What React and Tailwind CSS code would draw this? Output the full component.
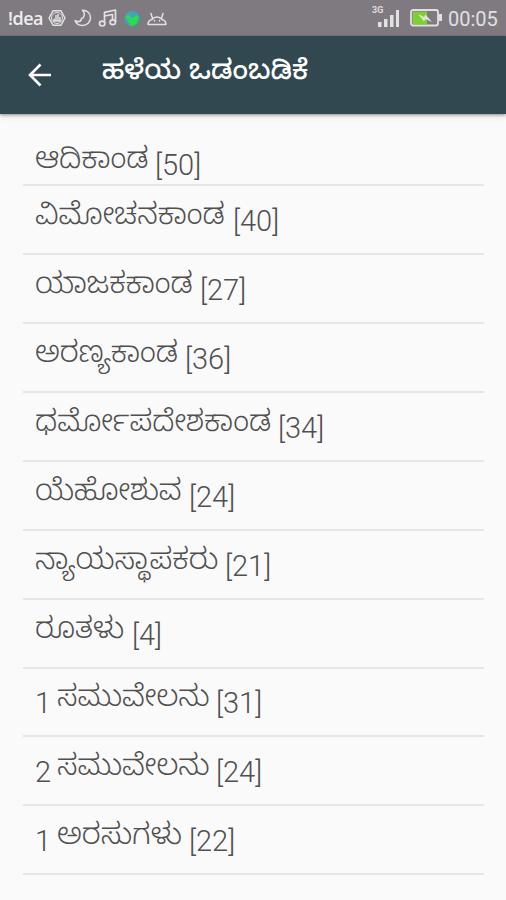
import { clsx } from 'clsx';

const books = [
  { name: 'ಆದಿಕಾಂಡ', chapters: 50, width: 120 },
  { name: 'ವಿಮೋಚನಕಾಂಡ', chapters: 40, width: 198 },
  { name: 'ಯಾಜಕಕಾಂಡ', chapters: 27, width: 165 },
  { name: 'ಅರಣ್ಯಕಾಂಡ', chapters: 36, width: 150 },
  { name: 'ಧರ್ಮೋಪದೇಶಕಾಂಡ', chapters: 34, width: 243 },
  { name: 'ಯೆಹೋಶುವ', chapters: 24, width: 154 },
  { name: 'ನ್ಯಾಯಸ್ಥಾಪಕರು', chapters: 21, width: 190 },
  { name: 'ರೂತಳು', chapters: 4, width: 97 },
  { part: 1, name: 'ಸಮುವೇಲನು', chapters: 31, width: 159 },
  { part: 2, name: 'ಸಮುವೇಲನು', chapters: 24, width: 159 },
  { part: 1, name: 'ಅರಸುಗಳು', chapters: 22, width: 132 },
];

function StatusBar() {
  return (
    <div className="flex h-9 items-center justify-between bg-[#7e7a7f] pl-2 pr-2 text-[#e2e0e3]">
      <div className="flex items-center">
        <span className="w-10 font-['Open_Sans',sans-serif] text-[18px] font-semibold leading-none tracking-[-0.5px] text-[#efedf0]">!dea</span>
        <svg className="h-[18px] w-[18px]" viewBox="0 0 18 18" fill="none" stroke="currentColor" strokeWidth="1.5">
          <path d="M5 1.8h8l4 7.2-4 7.2H5L1 9z" strokeLinejoin="round" />
          <circle cx="9" cy="9" r="5.5" strokeWidth="1" />
          <path d="M5 12h8M6.2 9.5V12M8 6v6M10 5v7M12 8v4" />
        </svg>
        <svg className="ml-2 h-[18px] w-[18px]" viewBox="0 0 18 18" fill="none" stroke="currentColor" strokeWidth="1.5" strokeLinejoin="round">
          <path d="M8.5 1.3c4.5-.3 8 3 8 7.3 0 4.5-3.5 7.9-8 7.900-3.500 0-6.200-1.500-7.400-4.700 2.500 1.200 5 .8 6.200-.6-.5-1.200 0-2.200 1.700-2.200 1.800-2.200 1.700-5.200-.5-7.700z" />
        </svg>
        <svg className="ml-1.5 h-[19px] w-[19px]" viewBox="0 0 19 19" fill="none" stroke="currentColor" strokeWidth="1.700" strokeLinejoin="round">
          <path d="M6.500 14V3.300L17.500 1v12M6.500 7l8-1.500v5.500" />
          <ellipse cx="4.200" cy="14.600" rx="2.700" ry="2.400" />
          <ellipse cx="14.800" cy="13.200" rx="2.700" ry="2.400" />
        </svg>
        <svg className="ml-[7px] h-[17px] w-4" viewBox="0 0 16 17">
          <circle cx="8" cy="8.500" r="7.500" fill="#36a9ba" />
          <path d="M1 6l4-1 3 3 5-3 2 3-3 6-5 2-3-5z" fill="#31d94c" />
        </svg>
        <svg className="ml-[7px] h-[15px] w-5" viewBox="0 0 20 15" fill="none" stroke="currentColor" strokeWidth="1.500" strokeLinejoin="round" strokeLinecap="round">
          <path d="M1 13.500c0-3 1.500-4.500 4-5C6.500 6.500 8 6 10 6s3.500.5 5 2.500c2.500.5 4 2 4 5zM5.500 7.500L4 2.500M14.500 7.500L16 2.500" />
          <path d="M7.500 9.500v.5M12.500 9.500v.5" />
        </svg>
      </div>
      <div className="flex items-center">
        <div className="relative h-7 w-[28px]">
          <span className="absolute left-0 top-[2px] font-['Roboto',sans-serif] text-[9px] font-semibold leading-none">3G</span>
          <svg className="absolute bottom-[4px] left-1.5 h-[18px] w-[22px]" viewBox="0 0 22 18" fill="currentColor">
            <path d="M0 12h3.500v5H0zM6 9h3.500v8H6zM12 5h3.500v12H12zM18 0h3v17h-3z" />
          </svg>
        </div>
        <svg className="ml-[10px] h-[18px] w-8" viewBox="0 0 32 18">
          <rect x="1" y="1" width="27" height="15.500" rx="2" fill="none" stroke="currentColor" strokeWidth="1.800" />
          <path d="M29 5h3v7h-3z" fill="currentColor" />
          <path d="M2.500 2.500H17v12.500H2.500z" fill="#7bd22f" />
          <path d="M8 5l6 3 1.500-2.500 6.500 7.500-6.500-3-1.500 2.500z" fill="currentColor" />
        </svg>
        <span className="ml-1.5 mt-0.5 w-[50px] font-['Roboto',sans-serif] text-[20px] leading-none">00:05</span>
      </div>
    </div>
  );
}

function Header() {
  return (
    <div className="flex h-[78px] items-start bg-[#324850] text-white shadow-[0_1px_3px_rgba(0,0,0,0.4),0_4px_6px_rgba(0,0,0,0.06)]">
      <svg className="ml-[28px] mt-[27px] h-6 w-6" viewBox="0 0 24 24" fill="none" stroke="currentColor" strokeWidth="2.600">
        <path d="M23 12H3M12.500 1.500L2 12l10.500 10.500" />
      </svg>
      <h1 className="ml-[50px] mt-[21px] whitespace-nowrap font-['Noto_Sans_Kannada','Noto_Sans',sans-serif] text-[27.300px] font-medium leading-[38px]">
        ಹಳೆಯ ಒಡಂಬಡಿಕೆ
      </h1>
    </div>
  );
}

function BookRow({ book, first }) {
  return (
    <li className={clsx('flex items-end border-b-2 border-[#e6e6e6] pl-3 text-[#505050]', first ? 'h-[55.300px] pb-px' : 'h-[68.900px] pb-[14px]')}>
      {book.part && (
        <span className="w-[22px] shrink-0 font-['Roboto',sans-serif] text-[29px] font-light leading-[36px]">{book.part}</span>
      )}
      <span
        className="mb-[1px] shrink-0 whitespace-nowrap font-['Noto_Sans_Kannada','Noto_Sans',sans-serif] text-[29.800px] font-light leading-[36px]"
        style={{ width: book.width }}
      >
        {book.name}
      </span>
      <span className="font-['Roboto',sans-serif] text-[29px] font-light leading-[36px]">[{book.chapters}]</span>
    </li>
  );
}

export default function App() {
  return (
    <div className="flex h-[900px] w-[506px] flex-col overflow-hidden bg-[#fafafa]">
      <StatusBar />
      <Header />
      <ul className="ml-[23px] mr-[22px] mt-[17px]">
        {books.map((book, i) => (
          <BookRow key={i} book={book} first={i === 0} />
        ))}
      </ul>
    </div>
  );
}
